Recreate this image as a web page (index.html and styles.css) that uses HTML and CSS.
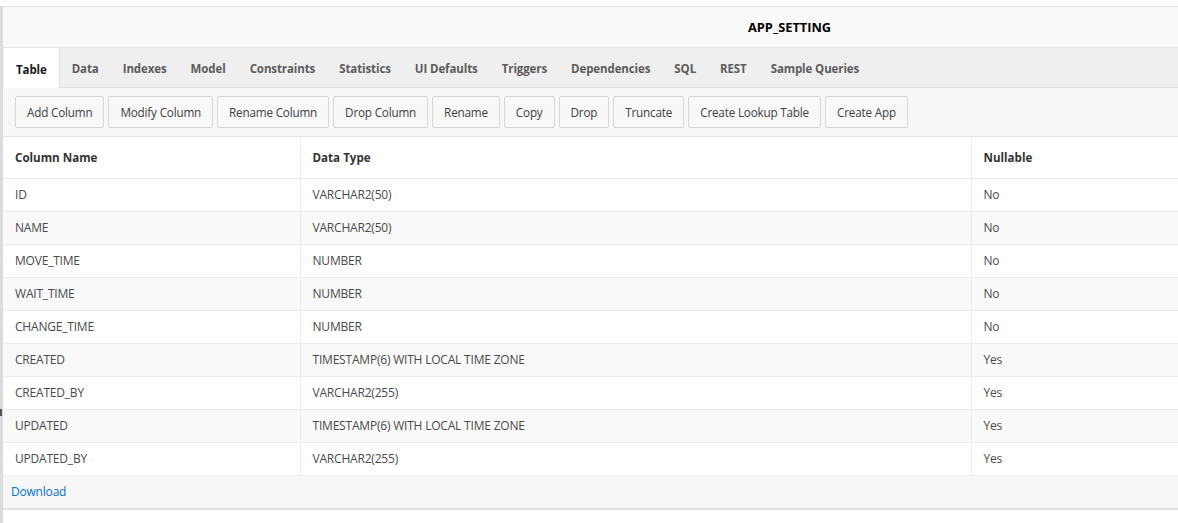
FILE: index.html
```html
<!DOCTYPE html>
<html>
<head>
<meta charset="utf-8">
<link rel="stylesheet" href="styles.css">
</head>
<body>
<div class="page">
  <div class="panel">
    <div class="title"><span class="title-text">APP_SETTING</span></div>
    <div class="tabs">
      <span class="tab active">Table</span>
      <span class="tab">Data</span>
      <span class="tab">Indexes</span>
      <span class="tab">Model</span>
      <span class="tab">Constraints</span>
      <span class="tab">Statistics</span>
      <span class="tab">UI Defaults</span>
      <span class="tab">Triggers</span>
      <span class="tab">Dependencies</span>
      <span class="tab">SQL</span>
      <span class="tab">REST</span>
      <span class="tab">Sample Queries</span>
    </div>
    <div class="toolbar">
      <button class="btn">Add Column</button>
      <button class="btn">Modify Column</button>
      <button class="btn">Rename Column</button>
      <button class="btn">Drop Column</button>
      <button class="btn">Rename</button>
      <button class="btn">Copy</button>
      <button class="btn">Drop</button>
      <button class="btn">Truncate</button>
      <button class="btn">Create Lookup Table</button>
      <button class="btn">Create App</button>
    </div>
    <table class="grid">
      <colgroup>
        <col class="c1"><col class="c2"><col class="c3">
      </colgroup>
      <thead>
        <tr><th>Column Name</th><th>Data Type</th><th>Nullable</th></tr>
      </thead>
      <tbody>
        <tr><td>ID</td><td>VARCHAR2(50)</td><td>No</td></tr>
        <tr><td>NAME</td><td>VARCHAR2(50)</td><td>No</td></tr>
        <tr><td>MOVE_TIME</td><td>NUMBER</td><td>No</td></tr>
        <tr><td>WAIT_TIME</td><td>NUMBER</td><td>No</td></tr>
        <tr><td>CHANGE_TIME</td><td>NUMBER</td><td>No</td></tr>
        <tr><td>CREATED</td><td>TIMESTAMP(6) WITH LOCAL TIME ZONE</td><td>Yes</td></tr>
        <tr><td>CREATED_BY</td><td>VARCHAR2(255)</td><td>Yes</td></tr>
        <tr><td>UPDATED</td><td>TIMESTAMP(6) WITH LOCAL TIME ZONE</td><td>Yes</td></tr>
        <tr><td>UPDATED_BY</td><td>VARCHAR2(255)</td><td>Yes</td></tr>
      </tbody>
    </table>
    <div class="footer"><a class="download" href="#">Download</a></div>
  </div>
  <span class="handle"></span>
</div>
</body>
</html>
```

FILE: styles.css
```css
* { box-sizing: border-box; }
html, body { margin: 0; padding: 0; background: #fff; }
body {
  font-family: "Open Sans", "Noto Sans", sans-serif;
  font-size: 12px;
  color: #404040;
  overflow: hidden;
}
.page {
  position: relative;
  height: 523px;
  padding-top: 6px;
}
.panel {
  height: 517px;
  border-left: 3px solid #dcdcdc;
}
.title {
  height: 42px;
  background: #f9f9f9;
  border-top: 1px solid #e2e2e2;
  border-bottom: 1px solid #e4e4e4;
  display: flex;
  align-items: center;
  padding-left: 745px;
}
.title-text {
  font-weight: 700;
  font-size: 12.8px;
  color: #000;
}
.tabs {
  height: 40px;
  background: #efefef;
  border-bottom: 1px solid #e2e2e2;
  display: flex;
  align-items: stretch;
  padding-left: 1px;
}
.tab {
  display: flex;
  align-items: center;
  padding: 2px 12px 0;
  font-weight: 700;
  font-size: 11.5px;
  color: #5c5c5c;
  letter-spacing: -0.1px;
}
.tab.active {
  background: #fff;
  color: #1a1a1a;
  border-right: 1px solid #e2e2e2;
  margin-bottom: -1px;
}
.toolbar {
  height: 49px;
  background: #f8f8f8;
  border-bottom: 1px solid #e4e4e4;
  display: flex;
  align-items: center;
  gap: 4px;
  padding: 0 12px;
}
.btn {
  height: 32px;
  padding: 0 11px;
  background: #f8f8f8;
  border: 1px solid #d6d6d6;
  border-radius: 2px;
  font-family: inherit;
  font-size: 11.7px;
  color: #404040;
  letter-spacing: -0.18px;
}
.grid {
  width: 100%;
  border-collapse: collapse;
  table-layout: fixed;
}
.c1 { width: 297px; }
.c2 { width: 671px; }
.grid th {
  height: 41px;
  text-align: left;
  font-weight: 700;
  font-size: 11.6px;
  color: #333;
  padding: 0 12px;
  border-bottom: 1px solid #ececec;
  border-right: 1px solid #ececec;
}
.grid td {
  height: 33px;
  padding: 0 12px;
  border-bottom: 1px solid #ececec;
  border-right: 1px solid #ececec;
  color: #4a4a4a;
  letter-spacing: -0.2px;
  white-space: nowrap;
}
.grid th:last-child, .grid td:last-child { border-right: none; }
.grid tbody tr:nth-child(even) { background: #f9f9f9; }
.footer {
  height: 34px;
  background: #f7f7f7;
  border-bottom: 2px solid #e2e2e2;
  display: flex;
  align-items: center;
  padding-left: 8px;
}
.download {
  color: #0572ce;
  text-decoration: none;
  letter-spacing: -0.2px;
}
.handle {
  position: absolute;
  left: 0;
  top: 409px;
  width: 2px;
  height: 7px;
  background: #555;
}
```
